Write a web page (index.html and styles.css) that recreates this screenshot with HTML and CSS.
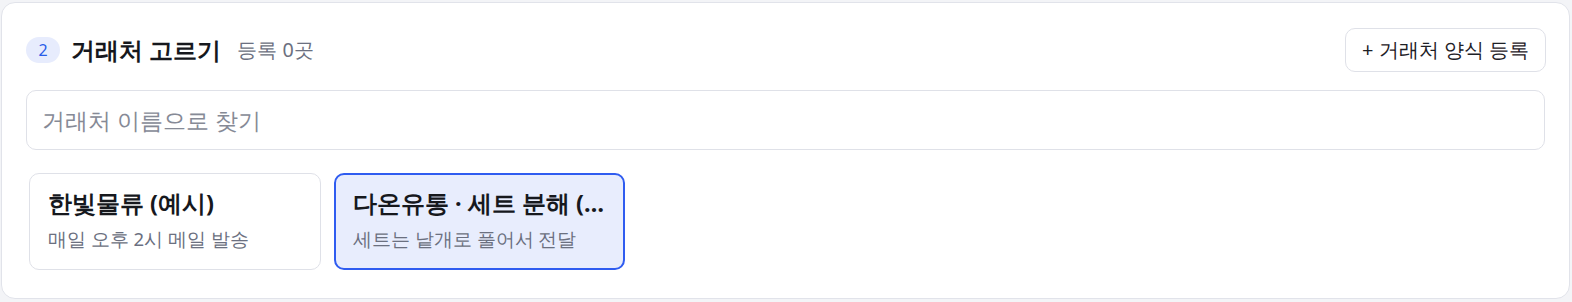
FILE: index.html
```html
<!DOCTYPE html>
<html lang="ko">
<head>
<meta charset="utf-8">
<link rel="stylesheet" href="styles.css">
</head>
<body>
<div class="page">
  <section class="panel">
    <header class="head">
      <div class="head-left">
        <span class="step">2</span>
        <h2 class="title">거래처 고르기</h2>
        <span class="count">등록 0곳</span>
      </div>
      <button class="add-btn">+ 거래처 양식 등록</button>
    </header>
    <div class="search">
      <input class="search-input" type="text" placeholder="거래처 이름으로 찾기">
    </div>
    <div class="list">
      <div class="item">
        <div class="item-name">한빛물류 (예시)</div>
        <div class="item-desc">매일 오후 2시 메일 발송</div>
      </div>
      <div class="item selected">
        <div class="item-name">다온유통 · 세트 분해 (예시)</div>
        <div class="item-desc">세트는 낱개로 풀어서 전달</div>
      </div>
    </div>
  </section>
</div>
</body>
</html>
```

FILE: styles.css
```css
* { box-sizing: border-box; }
html, body { margin: 0; padding: 0; }
body {
  background: #f3f4f7;
  font-family: ui-sans-serif, system-ui, sans-serif;
  color: #16181d;
}
.page { padding: 2px 2px 3px 1px; }
.panel {
  background: #fff;
  border: 1px solid #e1e3ea;
  border-radius: 14px;
  padding: 25px 24px 21px 24px;
  height: 297px;
}
.head {
  display: flex;
  align-items: center;
  justify-content: space-between;
  height: 44px;
}
.head-left { display: flex; align-items: center; }
.step {
  display: inline-flex;
  align-items: center;
  justify-content: center;
  width: 34px;
  height: 26px;
  border-radius: 13px;
  background: #e7ecfd;
  color: #2a5ce8;
  font-size: 16px;
}
.title {
  margin: 0 0 0 11px;
  font-size: 24.25px;
  line-height: 32px;
  font-weight: 700;
  color: #16181d;
}
.count {
  margin-left: 16px;
  font-size: 19.75px;
  color: #6b7080;
}
.add-btn {
  height: 44px;
  padding: 0 16px;
  border: 1px solid #dfe1e8;
  border-radius: 10px;
  background: #fff;
  font-family: inherit;
  font-size: 20px;
  color: #1d2026;
  margin-right: -1px;
}
.search { margin-top: 18px; }
.search-input {
  display: block;
  width: 100%;
  height: 60px;
  border: 1px solid #dfe1e8;
  border-radius: 10px;
  padding: 0 15px;
  font-family: inherit;
  font-size: 22.5px;
  color: #16181d;
  outline: none;
}
.search-input::placeholder { color: #868a96; }
.list {
  display: flex;
  gap: 13px;
  padding: 3px;
  margin-top: 20px;
}
.item {
  width: 292px;
  height: 97px;
  border: 1px solid #dfe1e8;
  border-radius: 10px;
  background: #fff;
  padding: 14px 18px 0;
}
.item.selected {
  width: 291px;
  border: 2px solid #2f5cf0;
  background: #e8edfd;
  padding: 13px 17px 0;
}
.item-name {
  font-size: 23.5px;
  font-weight: 700;
  white-space: nowrap;
  overflow: hidden;
  text-overflow: ellipsis;
  line-height: 30px;
}
.item-desc {
  margin-top: 9px;
  font-size: 18.5px;
  line-height: 24px;
  color: #6b7080;
  white-space: nowrap;
}
```
